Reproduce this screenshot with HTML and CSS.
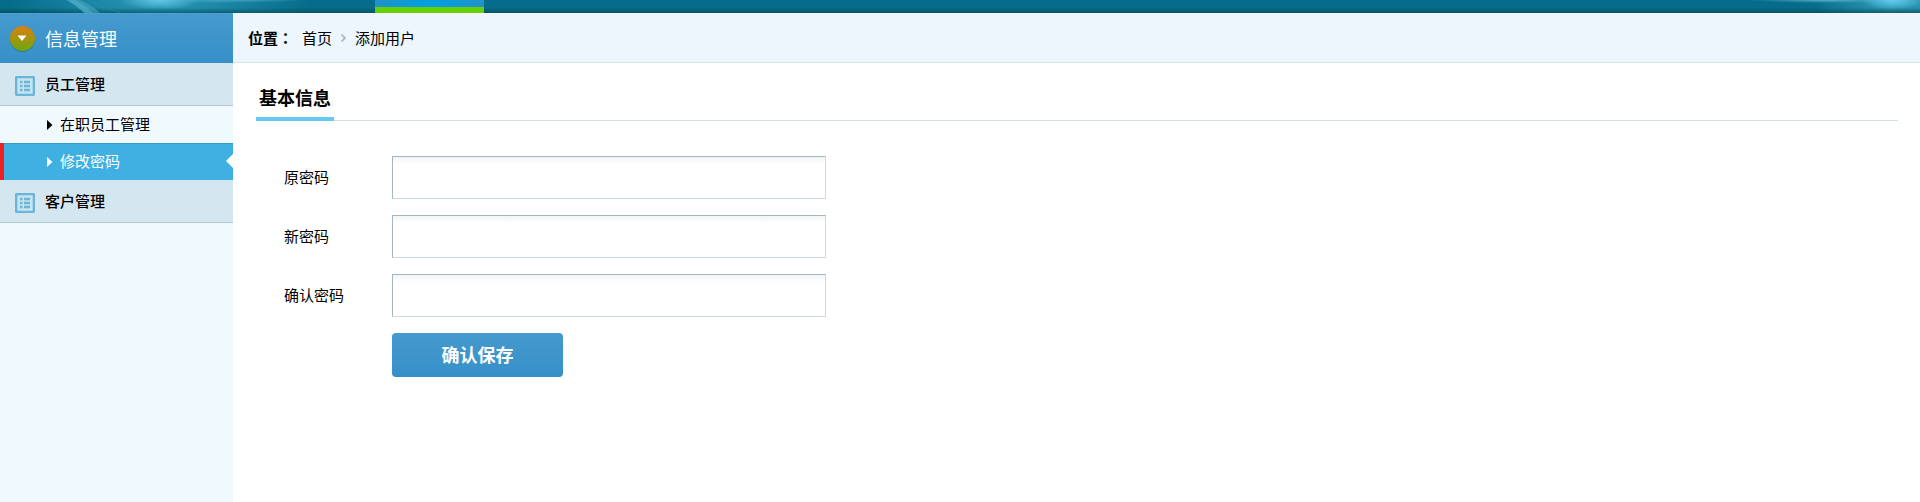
FILE: index.html
```html
<!DOCTYPE html>
<html lang="zh-CN">
<head>
<meta charset="utf-8">
<title>修改密码</title>
<link rel="stylesheet" href="styles.css">
</head>
<body>
<header class="topbar">
  <svg class="streak" viewBox="0 0 120 13" aria-hidden="true"><path d="M66 0H80Q92 5 100 13H84Q77 6 66 0Z" fill="#4fb0cb" opacity=".5"/><path d="M68 0H75Q86 6 93 13H85Q77 6 68 0Z" fill="#5ebbd4" opacity=".4"/><path d="M88 0Q105 9 122 13" fill="none" stroke="#3c9ab3" opacity=".35"/></svg>
  <div class="topbar-tab"></div>
</header>
<div class="layout">
  <aside class="sidebar">
    <div class="side-title">
      <svg class="badge" viewBox="0 0 25 26" aria-hidden="true">
        <defs><linearGradient id="ball" x1="0" y1="0" x2="0" y2="1"><stop offset="0" stop-color="#d97f0c"/><stop offset=".5" stop-color="#a8930e"/><stop offset="1" stop-color="#68aa10"/></linearGradient></defs>
        <circle cx="12.500" cy="13.500" r="12.500" fill="#2b6485" opacity=".6"/>
        <circle cx="12.500" cy="12.500" r="12.500" fill="url(#ball)"/>
        <path d="M7.500 9.500H16.500L12 15Z" fill="#fff"/>
      </svg>
      <span>信息管理</span>
    </div>
    <nav>
      <div class="group">
        <svg class="list-icon" viewBox="0 0 20 20" aria-hidden="true"><rect x="1" y="1" width="18" height="18" rx="1.5" fill="#c8e4f0" stroke="#6bb5d8" stroke-width="2.600"/><path d="M5 6H7.500M5 10H7.500M5 14H7.500M9 6H15M9 10H15M9 14H15" stroke="#6bb5d8" stroke-width="2.600"/></svg>
        <span>员工管理</span>
      </div>
      <ul class="menu">
        <li><a class="item" href="#"><svg class="arrow" viewBox="0 0 6 10" aria-hidden="true"><path d="M0 0L5.500 5L0 10Z" fill="currentColor"/></svg><span>在职员工管理</span></a></li>
        <li><a class="item active" href="#"><svg class="arrow" viewBox="0 0 6 10" aria-hidden="true"><path d="M0 0L5.500 5L0 10Z" fill="currentColor"/></svg><span>修改密码</span></a></li>
      </ul>
      <div class="group">
        <svg class="list-icon" viewBox="0 0 20 20" aria-hidden="true"><rect x="1" y="1" width="18" height="18" rx="1.5" fill="#c8e4f0" stroke="#6bb5d8" stroke-width="2.600"/><path d="M5 6H7.500M5 10H7.500M5 14H7.500M9 6H15M9 10H15M9 14H15" stroke="#6bb5d8" stroke-width="2.600"/></svg>
        <span>客户管理</span>
      </div>
    </nav>
  </aside>
  <main class="main">
    <div class="crumbs">
      <strong>位置<span class="colon" lang="zh-TW">：</span></strong>
      <a href="#">首页</a>
      <svg class="chevron" viewBox="0 0 5 8" aria-hidden="true"><path d="M0.500 0.500L4 4L0.500 7.500" fill="none" stroke="#a9bac4" stroke-width="1.800"/></svg>
      <a href="#">添加用户</a>
    </div>
    <section class="content">
      <div class="form-title"><h1>基本信息</h1></div>
      <form class="form">
        <label for="old">原密码</label><input id="old" type="password">
        <label for="new">新密码</label><input id="new" type="password">
        <label for="confirm">确认密码</label><input id="confirm" type="password">
        <button type="button">确认保存</button>
      </form>
    </section>
  </main>
</div>
</body>
</html>
```
FILE: styles.css
```css
* { box-sizing: border-box; }
body {
  margin: 0;
  min-height: 100vh;
  display: flex;
  flex-direction: column;
  font: 15px/20px "Noto Sans CJK SC", sans-serif;
  color: #000;
  background: #fff;
}
a { color: inherit; text-decoration: none; }

.topbar {
  position: relative;
  height: 13px;
  background:
    linear-gradient(to bottom, transparent 60%, rgba(0, 65, 80, .55)),
    radial-gradient(ellipse 40px 10px at 160px 0, #62c6e2, transparent),
    radial-gradient(ellipse 150px 40px at 160px 0, #2c9ab8, transparent),
    radial-gradient(ellipse 90px 3px at 215px 0, #5fb2c8, transparent),
    radial-gradient(ellipse 30px 10px at calc(100% - 28px) 0, #62cdf0, transparent),
    radial-gradient(ellipse 90px 26px at calc(100% - 20px) 0, #3ba3bf, transparent),
    radial-gradient(ellipse 80px 3px at calc(100% - 90px) 0, #5fb2c8, transparent),
    linear-gradient(#066c8f, #066c84);
}
.streak { position: absolute; left: 0; top: 0; width: 120px; height: 13px; }
.topbar-tab {
  width: 109px;
  height: 13px;
  margin-left: 375px;
  border-bottom: 6px solid #66d000;
  background: linear-gradient(to right, #2092c8, #089ddd 40%, #089ddd 60%, #2092c8);
}

.layout { flex: 1; display: flex; }
.sidebar { width: 233px; flex: none; background: #f0f9fe; }
.side-title {
  height: 50px;
  display: flex;
  align-items: center;
  gap: 10px;
  padding-left: 10px;
  border-top: 1px solid #4f9fd0;
  background: linear-gradient(#459ace, #3690c7);
  color: #fff;
  font-size: 18px;
}
.side-title span { padding-bottom: 2px; }
.badge { width: 25px; height: 26px; }
.group {
  height: 43px;
  display: flex;
  align-items: center;
  gap: 10px;
  padding-left: 15px;
  border-bottom: 1px solid #b7c9d2;
  background: #d4e7f0;
  font-weight: 500;
}
.list-icon { width: 20px; height: 20px; margin-top: 3px; }
.menu { margin: 0; padding: 0; list-style: none; }
.item {
  position: relative;
  height: 37px;
  display: flex;
  align-items: center;
  gap: 7px;
  padding-left: 47px;
}
.item span { padding-bottom: 2px; }
.arrow { width: 6px; height: 10px; }
.active {
  padding-left: 43px;
  border-left: 4px solid #ed2024;
  background: #40afe2;
  box-shadow: inset 0 1px #369cca;
  color: #fff;
}
.active::after {
  content: "";
  position: absolute;
  right: 0;
  top: 11px;
  border: 7px solid transparent;
  border-left-width: 0;
  border-right-color: #fff;
}

.main { flex: 1; min-width: 0; }
.crumbs {
  height: 50px;
  display: flex;
  align-items: center;
  gap: 9px;
  padding-left: 15px;
  border-top: 1px solid #f7fafd;
  border-bottom: 1px solid #d7e4ea;
  background: #edf6fc;
}
.crumbs strong { font-weight: 700; }
.colon { font-family: "Noto Sans CJK TC", sans-serif; }
.chevron { width: 5px; height: 8px; }
.content { padding: 16px 22px 0 23px; }
.form-title { display: flex; height: 42px; border-bottom: 1px solid #d0dee5; }
.form-title h1 {
  height: 42px;
  margin: 0;
  padding: 0 3px;
  border-bottom: 4px solid #66c9f3;
  font-size: 18px;
  line-height: 36px;
  font-weight: 700;
}
.form {
  display: grid;
  grid-template-columns: 108px minmax(0, 434px);
  row-gap: 16px;
  align-items: center;
  padding: 35px 0 20px 28px;
}
.form label { padding-bottom: 2px; }
.form input {
  width: 100%;
  height: 43px;
  padding: 0 10px;
  border: 1px solid;
  border-color: #a7b5bc #ced9df #ced9df #a7b5bc;
  background: linear-gradient(#f1f4f6, #fff 7px);
  font: inherit;
}
.form button {
  grid-column: 2;
  width: 171px;
  height: 44px;
  padding: 0 0 2px;
  border: 0;
  border-radius: 4px;
  background: linear-gradient(#459ace, #3690c7);
  color: #fff;
  font: 700 18px/24px "Noto Sans CJK SC", sans-serif;
}
```
